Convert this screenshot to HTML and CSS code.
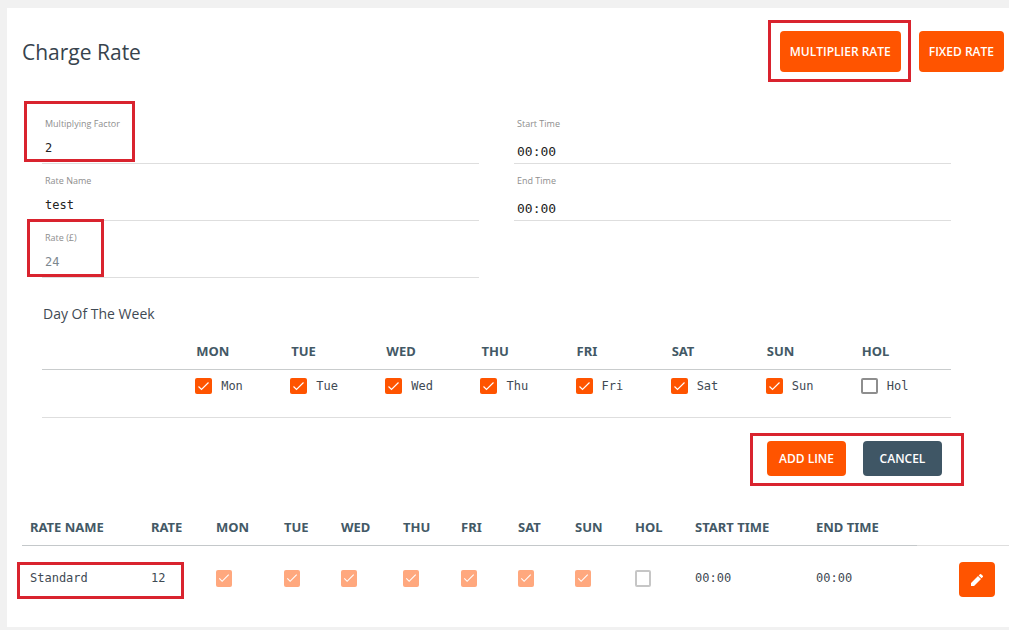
FILE: index.html
```html
<!DOCTYPE html>
<html lang="en">
<head>
<meta charset="utf-8">
<meta name="viewport" content="width=device-width, initial-scale=1">
<title>Charge Rate</title>
<link rel="stylesheet" href="styles.css">
</head>
<body>
<main class="card">
  <header class="card-header">
    <h1 class="title">Charge Rate</h1>
    <div class="header-actions">
      <div class="marked mark-multiplier"><button type="button" class="btn btn-large">MULTIPLIER RATE</button></div>
      <button type="button" class="btn btn-large">FIXED RATE</button>
    </div>
  </header>

  <form class="rate-form">
    <div class="fields">
      <div class="field-column">
        <div class="field marked mark-factor"><label for="factor">Multiplying Factor</label><input id="factor" type="text" value="2"></div>
        <div class="field"><label for="name">Rate Name</label><input id="name" type="text" value="test"></div>
        <div class="field marked mark-rate"><label for="rate">Rate (£)</label><input id="rate" type="text" value="24" disabled></div>
      </div>
      <div class="field-column">
        <div class="field field-time"><label for="start">Start Time</label><input id="start" type="text" value="00:00"></div>
        <div class="field field-time"><label for="end">End Time</label><input id="end" type="text" value="00:00"></div>
      </div>
    </div>

    <h2 class="subtitle">Day Of The Week</h2>
    <table class="days">
      <colgroup><col class="c-blank"><col class="c-day" span="7"><col class="c-holiday"></colgroup>
      <thead>
        <tr><td></td><th>MON</th><th>TUE</th><th>WED</th><th>THU</th><th>FRI</th><th>SAT</th><th>SUN</th><th>HOL</th></tr>
      </thead>
      <tbody>
        <tr>
          <td></td>
          <td><label class="day"><input type="checkbox" class="check" checked>Mon</label></td>
          <td><label class="day"><input type="checkbox" class="check" checked>Tue</label></td>
          <td><label class="day"><input type="checkbox" class="check" checked>Wed</label></td>
          <td><label class="day"><input type="checkbox" class="check" checked>Thu</label></td>
          <td><label class="day"><input type="checkbox" class="check" checked>Fri</label></td>
          <td><label class="day"><input type="checkbox" class="check" checked>Sat</label></td>
          <td><label class="day"><input type="checkbox" class="check" checked>Sun</label></td>
          <td><label class="day"><input type="checkbox" class="check">Hol</label></td>
        </tr>
      </tbody>
    </table>

    <div class="form-actions">
      <div class="action-group marked mark-actions">
        <button type="button" class="btn">ADD LINE</button>
        <button type="button" class="btn btn-dark">CANCEL</button>
      </div>
    </div>
  </form>

  <table class="rates">
    <colgroup>
      <col class="c-name"><col class="c-rate"><col class="c-mon"><col class="c-tue"><col class="c-wed"><col class="c-thu"><col class="c-fri"><col class="c-sat"><col class="c-sun"><col class="c-hol"><col class="c-start"><col class="c-end"><col class="c-edit">
    </colgroup>
    <thead>
      <tr><th>RATE NAME</th><th>RATE</th><th>MON</th><th>TUE</th><th>WED</th><th>THU</th><th>FRI</th><th>SAT</th><th>SUN</th><th>HOL</th><th>START TIME</th><th>END TIME</th><td></td></tr>
    </thead>
    <tbody>
      <tr>
        <td class="marked mark-row">Standard</td>
        <td>12</td>
        <td><input type="checkbox" class="check" aria-label="Monday" checked disabled></td>
        <td><input type="checkbox" class="check" aria-label="Tuesday" checked disabled></td>
        <td><input type="checkbox" class="check" aria-label="Wednesday" checked disabled></td>
        <td><input type="checkbox" class="check" aria-label="Thursday" checked disabled></td>
        <td><input type="checkbox" class="check" aria-label="Friday" checked disabled></td>
        <td><input type="checkbox" class="check" aria-label="Saturday" checked disabled></td>
        <td><input type="checkbox" class="check" aria-label="Sunday" checked disabled></td>
        <td><input type="checkbox" class="check" aria-label="Holiday" disabled></td>
        <td>00:00</td>
        <td>00:00</td>
        <td class="edit-cell">
          <button type="button" class="btn btn-icon" aria-label="Edit">
            <svg viewBox="0 0 24 24" width="16" height="16" fill="currentColor" aria-hidden="true"><path d="M3 16.500V21h4.500L18 10.500 13.500 6 3 16.500zM20.710 7.500a1.200 1.200 0 0 0 0-1.700l-2.510-2.510a1.200 1.200 0 0 0-1.700 0L14.500 5.200 18.800 9.500l1.910-2z"/></svg>
          </button>
        </td>
      </tr>
    </tbody>
  </table>
</main>
</body>
</html>
```
FILE: styles.css
```css
*,
*::after {
  box-sizing: border-box;
}

body {
  margin: 0;
  padding: 8px 0 2px 7px;
  background: #f1f1f1;
  color: #3f4a54;
  font-family: "Open Sans", "Noto Sans", sans-serif;
}

.card {
  padding: 23px 0 16px 15px;
  background: #fff;
}

.card-header {
  display: flex;
  align-items: center;
  justify-content: space-between;
  padding-right: 5px;
}

.title {
  margin: 0;
  color: #37434d;
  font-size: 21px;
  font-weight: 400;
  line-height: 28px;
}

.header-actions {
  display: flex;
  gap: 18px;
}

.btn {
  min-width: 79px;
  height: 35px;
  padding: 0 10px;
  border: 0;
  border-radius: 4px;
  background: #ff5400;
  color: #fff;
  font-family: inherit;
  font-size: 12px;
  font-weight: 600;
  white-space: nowrap;
}

.btn-large {
  height: 41px;
}

.btn-dark {
  background: #3f5665;
}

/* Callout frames drawn over the highlighted parts */
.marked {
  position: relative;
}

.marked::after {
  content: "";
  position: absolute;
  border: 3px solid #d9232e;
  pointer-events: none;
}

.mark-multiplier::after {
  inset: -11px -10px -10px -12px;
}

.mark-factor::after {
  inset: -6px auto 1px -18px;
  width: 111px;
}

.mark-rate::after {
  inset: -2px auto 0 -15px;
  width: 77px;
}

.mark-actions::after {
  inset: -8px -22px -10px -17px;
}

.mark-row::after {
  top: 16px;
  left: -5px;
  width: 167px;
  height: 37px;
}

.rate-form {
  padding: 35px 58px 0 20px;
}

.fields {
  display: grid;
  grid-template-columns: 1fr 1fr;
  gap: 35px;
}

.field {
  display: flex;
  flex-direction: column;
  height: 57px;
  padding: 10px 3px 0;
  border-bottom: 1px solid #dedede;
}

.field label {
  color: #8e8e8e;
  font-size: 9px;
  line-height: 14px;
}

.field input {
  width: 100%;
  height: 20px;
  margin-top: 7px;
  padding: 0;
  border: 0;
  outline: 0;
  background: transparent;
  color: #222;
  font-family: "DejaVu Sans Mono", monospace;
  font-size: 12px;
}

.field input:disabled {
  color: #7c888f;
}

.field-time input {
  margin-top: 10px;
  font-size: 13px;
}

.subtitle {
  margin: 26px 0 9px 1px;
  font-size: 14px;
  font-weight: 400;
  line-height: 20px;
}

table {
  width: 100%;
  border-collapse: collapse;
  table-layout: fixed;
}

th {
  color: #435966;
  font-family: "Noto Sans", sans-serif;
  font-size: 13px;
  font-weight: 700;
  line-height: 18px;
  text-align: left;
  white-space: nowrap;
}

td {
  font-family: "DejaVu Sans Mono", monospace;
  font-size: 12px;
}

.days {
  border-bottom: 1px solid #dedede;
}

.days th {
  padding: 9px 0 9px 1px;
}

.days thead {
  border-bottom: 1px solid #c9cccd;
}

.days tbody td {
  height: 48px;
  padding: 8px 0 0;
  vertical-align: top;
}

.c-blank {
  width: 153px;
}

.c-day {
  width: 95px;
}

.c-holiday {
  width: 90px;
}

.day {
  display: flex;
  align-items: center;
  gap: 9px;
  line-height: 16px;
}

.check {
  flex: none;
  display: block;
  width: 17px;
  height: 16px;
  margin: 0;
  appearance: none;
  border: 2px solid #8e8e8e;
  border-radius: 2px;
}

.check:checked {
  border: 0;
  background: #ff5400 url("data:image/svg+xml,%3Csvg xmlns='http://www.w3.org/2000/svg' viewBox='0 0 17 17'%3E%3Cpath d='M3.500 9l3 3L13.500 5' fill='none' stroke='white' stroke-width='1.200'/%3E%3C/svg%3E") center / 100% no-repeat;
}

.check:disabled {
  width: 16px;
  height: 17px;
  opacity: 0.5;
}

.form-actions {
  display: flex;
  justify-content: flex-end;
  padding: 23px 9px 0 0;
}

.action-group {
  display: flex;
  gap: 17px;
}

.rates {
  margin-top: 33px;
}

.rates th {
  padding: 9px 0 9px 8px;
  border-bottom: 1px solid #c4c8ca;
}

.rates thead td {
  border-bottom: 1px solid #dedede;
}

.rates tbody td {
  height: 65px;
  padding: 0 0 0 8px;
}

.rates tbody .edit-cell {
  padding: 3px 14px 0 0;
}

.btn-icon {
  display: flex;
  align-items: center;
  justify-content: center;
  min-width: 36px;
  margin-left: auto;
}

.c-name,
.c-start {
  width: 121px;
}

.c-rate {
  width: 65px;
}

.c-mon {
  width: 68px;
}

.c-tue,
.c-fri,
.c-sat {
  width: 57px;
}

.c-wed {
  width: 62px;
}

.c-thu {
  width: 58px;
}

.c-sun,
.c-hol {
  width: 60px;
}

.c-end {
  width: 109px;
}

.c-edit {
  width: 92px;
}
```
